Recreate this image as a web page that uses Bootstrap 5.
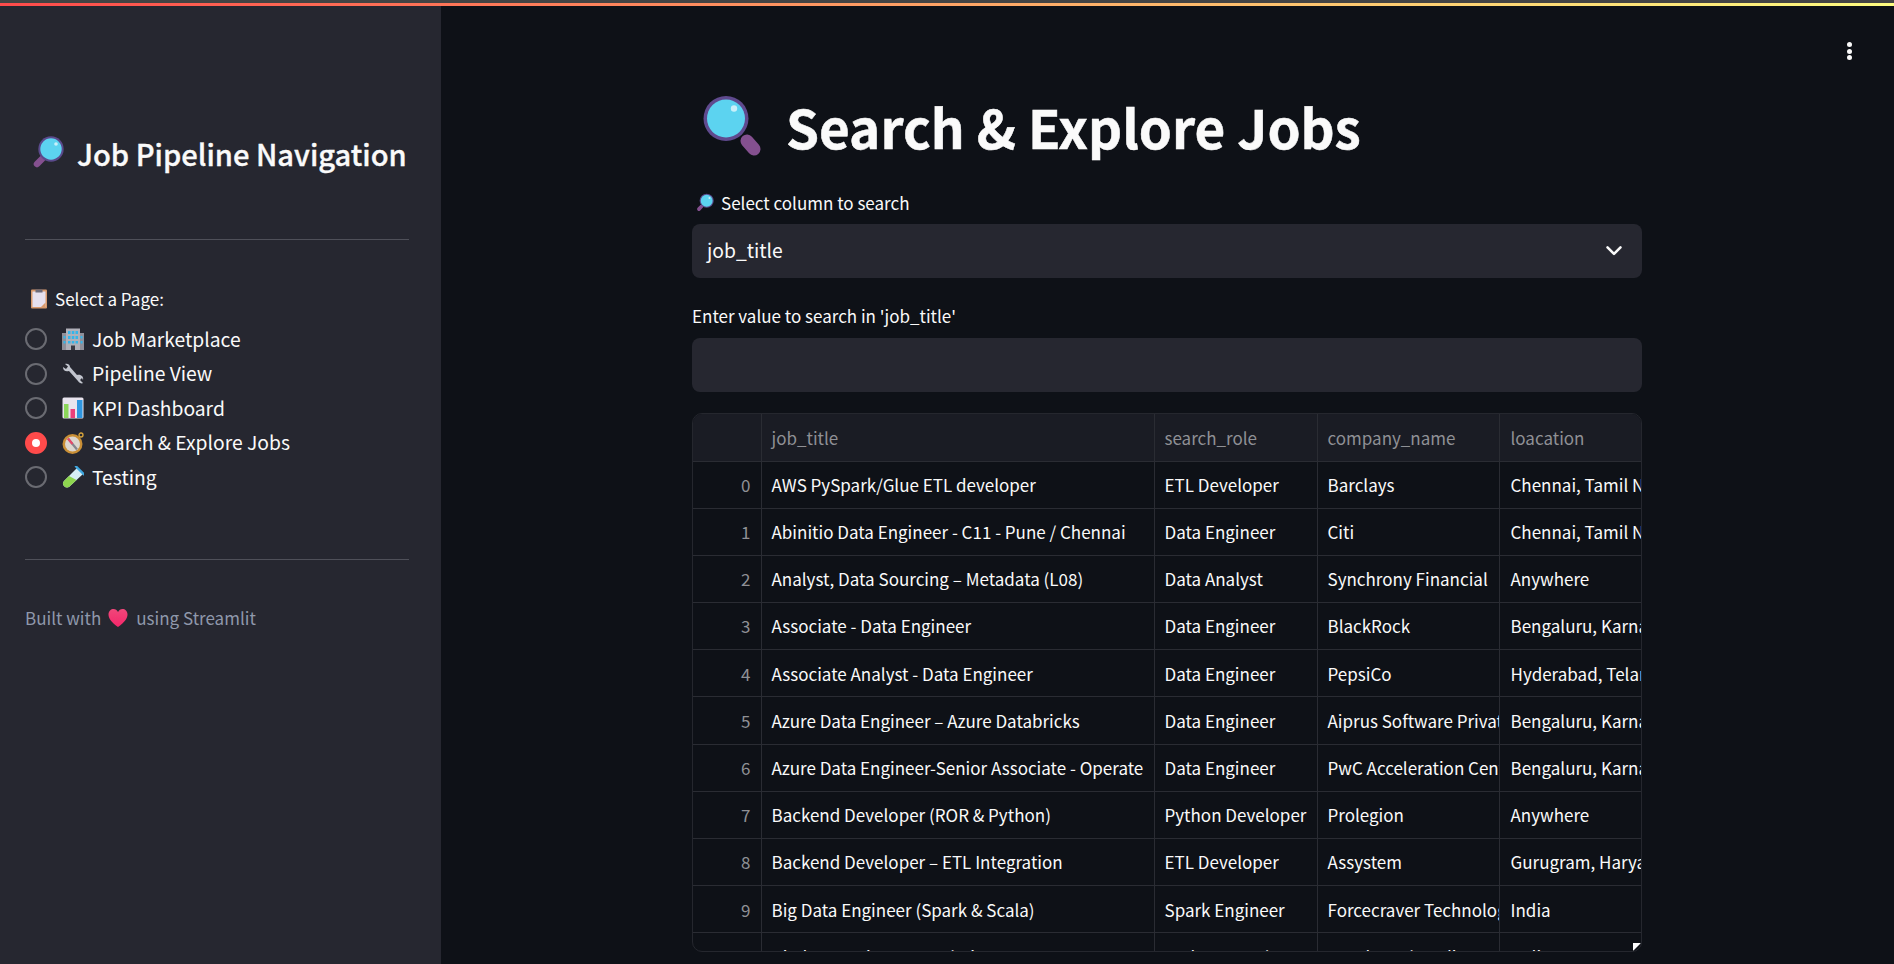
<!DOCTYPE html>
<html lang="en">
<head>
  <meta charset="UTF-8" />
  <meta name="viewport" content="width=device-width, initial-scale=1.0"/>
  <title>Search & Explore Jobs</title>
  <link href="https://cdn.jsdelivr.net/npm/bootstrap@5.3.0/dist/css/bootstrap.min.css" rel="stylesheet"/>
  <style>
    html, body { height: 100%; overflow: hidden; }
    body { background: #0e1117; color: #fafafa; font-family: "Noto Sans CJK SC", "Noto Sans", sans-serif; }
    svg { flex: none; }
    .top-strip { height: 3px; background: #444; }
    .top-rainbow { height: 3px; background: linear-gradient(90deg, #ff4b4b, #fffd80); }
    .app-body { height: 958px; }

    /* sidebar */
    .side-panel { width: 441px; background: #262730; padding: 0 32px 0 25px; }
    .side-title { font-size: 29.1px; font-weight: 500; line-height: 40px; margin: 127px 0 0 5px; -webkit-text-stroke: 0.35px #fafafa; }
    .side-title svg { width: 36px; height: 36px; margin-right: 11px; }
    .side-rule { border-top: 1px solid #4f5059; width: 384px; }
    .rule-one { margin-top: 66px; }
    .rule-two { margin-top: 64px; }
    .page-label { font-size: 17px; line-height: 24px; margin: 47px 0 0 4px; }
    .page-label svg { width: 20px; height: 20px; margin-right: 6px; }
    .page-list { margin-top: 11px; }
    .page-item { height: 34.5px; font-size: 19.3px; }
    .radio-dot { width: 22px; height: 22px; border-radius: 50%; border: 2px solid #6a6b72; margin-right: 15px; flex: none; }
    .radio-dot.is-on { background: #ff4b4b; border-color: #ff4b4b; }
    .radio-dot.is-on::after { content: ""; width: 8px; height: 8px; border-radius: 50%; background: #fff; }
    .page-item svg { width: 22px; height: 22px; margin-right: 8px; }
    .built-note { font-size: 17px; line-height: 24px; color: #8f98ab; margin: 46px 0 0 0; }
    .built-note svg { width: 20px; height: 20px; margin: 0 8px 0 7px; }

    /* main */
    .main-col { position: relative; }
    .kebab { position: absolute; top: 36px; right: 42px; width: 5px; display: flex; flex-direction: column; gap: 1.7px; }
    .kebab i { width: 5px; height: 5px; border-radius: 50%; background: #fafafa; display: block; }
    .main-inner { width: 950px; margin-left: 251px; }
    .page-title { font-size: 53px; font-weight: 700; line-height: 70px; margin: 85px 0 0 10px; -webkit-text-stroke: 0.5px #fafafa; }
    .page-title svg { width: 62px; height: 62px; margin-right: 22px; }
    .field-label { font-size: 17px; line-height: 24px; }
    .field-label svg { width: 20px; height: 20px; margin-right: 6px; }
    .label-one { margin: 30px 0 0 3px; }
    .label-one + .field-box { margin-top: 9px; padding-bottom: 2px; }
    .label-two { margin-top: 26px; }
    .field-box { height: 54px; background: #262730; border-radius: 8px; margin-top: 10px; padding: 0 15px; font-size: 19.3px; }
    .field-box svg { width: 26px; height: 26px; }

    /* table */
    .data-frame { height: 539px; margin-top: 21px; border: 1px solid #25272e; border-radius: 10px; overflow: hidden; position: relative; }
    .data-table { table-layout: fixed; width: 1100px; border-collapse: collapse; font-size: 17px; }
    .data-table th, .data-table td { height: 47.2px; padding: 0 10px; border-right: 1px solid #2a2c33; border-bottom: 1px solid #2a2c33; white-space: nowrap; overflow: hidden; font-weight: 400; }
    .data-table th { height: 47px; padding-top: 1px; background: #1a1c24; color: #8f9095; }
    .data-table td { color: #fafafa; }
    .data-table td.row-idx { text-align: right; color: #8f9095; }
    .data-table th:last-child, .data-table td:last-child { padding-left: 11px; }
    .col-idx { width: 68px; }
    .col-title { width: 393px; }
    .col-role { width: 163px; }
    .col-company { width: 182px; }
    .col-loc { width: 294px; }
    .resize-grip { position: absolute; right: 0; bottom: 0; width: 0; height: 0; border-top: 8px solid #fff; border-right: 8px solid transparent; }
  </style>
</head>
<body>
  <svg width="0" height="0" class="position-absolute">
    <defs>
      <linearGradient id="heart-fill" x1="0" y1="0" x2="0" y2="1">
        <stop offset="0" stop-color="#f0477a"/>
        <stop offset="1" stop-color="#f5266a"/>
      </linearGradient>
      <symbol id="ico-lens-left" viewBox="0 0 36 36">
        <path d="M12 24 L7 29" stroke="#84508f" stroke-width="6.500" stroke-linecap="round"/>
        <circle cx="21" cy="14" r="12.700" fill="#5b4a8c"/>
        <circle cx="21" cy="14" r="10.700" fill="#5cd3f0"/>
        <circle cx="26" cy="9" r="1.800" fill="#c9f0fa"/>
      </symbol>
      <symbol id="ico-lens-right" viewBox="0 0 62 62">
        <path d="M45 46 L52 54" stroke="#84508f" stroke-width="13" stroke-linecap="round"/>
        <circle cx="24" cy="23.500" r="22.500" fill="#5f4a8e"/>
        <circle cx="24" cy="23.500" r="19" fill="#5cd3f0"/>
        <circle cx="32" cy="13.500" r="3.200" fill="#c9f0fa"/>
      </symbol>
      <symbol id="ico-clipboard" viewBox="0 0 20 20">
        <rect x="2" y="0.500" width="16" height="19" rx="1" fill="#d99a6c"/>
        <rect x="3.500" y="2.500" width="13" height="15.500" fill="#e6e0ee"/>
        <path d="M12 18 L16.500 13.500 V18 Z" fill="#d99a6c"/>
        <rect x="6.500" y="0.500" width="7" height="3" fill="#6d6a78"/>
      </symbol>
      <symbol id="ico-building" viewBox="0 0 22 22">
        <rect x="0" y="5" width="5" height="17" fill="#8f8f99"/>
        <rect x="17" y="5" width="5" height="17" fill="#8f8f99"/>
        <rect x="4" y="0.500" width="14" height="21.500" fill="#b0b0b9"/>
        <path d="M6 3h2.500v3H6zM9.800 3h2.500v3H9.800zM13.500 3H16v3h-2.500zM6 8h2.500v3H6zM9.800 8h2.500v3H9.800zM13.500 8H16v3h-2.500zM6 13h2.500v2.500H6zM9.800 13h2.500v2.500H9.800zM13.500 13H16v2.500h-2.500zM1.500 8h2v2.500h-2zM18.500 8h2v2.500h-2zM1.500 13h2v2.500h-2zM18.500 13h2v2.500h-2z" fill="#35b5ea"/>
        <rect x="9" y="17.500" width="4" height="4.500" fill="#3a3a44"/>
      </symbol>
      <symbol id="ico-wrench" viewBox="0 0 22 22">
        <path d="M3 1 L6 3.500 L4 6 L1 4 C1 8 4 9 7 8 L16 18 C17 20 20 21 21 20 L18 17 L20 15 L21 17 C22 14 19 11 15 12 L8 4 C8 2 6 0 3 1 Z" fill="#c2c5ce"/>
      </symbol>
      <symbol id="ico-chart" viewBox="0 0 22 22">
        <rect x="0.500" y="0.500" width="21" height="21" rx="1.500" fill="#e8e4ee"/>
        <rect x="2" y="7" width="4.500" height="14" fill="#8bd65a"/>
        <rect x="8.500" y="12" width="4.500" height="9" fill="#ec3f7a"/>
        <rect x="15" y="3" width="5.500" height="18" fill="#2f96e0"/>
      </symbol>
      <symbol id="ico-compass" viewBox="0 0 22 22">
        <circle cx="10.500" cy="12" r="10" fill="#c98f36"/>
        <circle cx="10.500" cy="12" r="7.500" fill="#dcd6cf"/>
        <path d="M6 6.500 L15 17.500" stroke="#85858f" stroke-width="2.200"/>
        <path d="M6 6.500 L10.500 12" stroke="#e8476a" stroke-width="2.200"/>
        <circle cx="19" cy="3" r="2" fill="none" stroke="#d9a63c" stroke-width="1.300"/>
      </symbol>
      <symbol id="ico-tube" viewBox="0 0 22 22">
        <path d="M15 2 L21 8 L7 21 C3 23 -1 18 2 15 Z" fill="#d6eef5"/>
        <path d="M7 10 L14.500 14 L7 21 C3 23 -1 18 2 15 Z" fill="#8ed64f"/>
        <path d="M14 0.500 L22 8.500" stroke="#3fa7e0" stroke-width="2.400" stroke-linecap="round"/>
      </symbol>
      <symbol id="ico-heart" viewBox="0 0 20 20">
        <path d="M10 19 C3 14 0.500 10 0.500 6.500 C0.500 3 3 1 5.500 1 C7.500 1 9 2 10 4 C11 2 12.500 1 14.500 1 C17 1 19.500 3 19.500 6.500 C19.500 10 17 14 10 19 Z" fill="url(#heart-fill)"/>
      </symbol>
    </defs>
  </svg>

  <div class="top-strip"></div>
  <div class="top-rainbow"></div>
  <div class="app-body d-flex">
    <!-- Sidebar -->
    <aside class="side-panel flex-shrink-0">
      <div class="side-title d-flex align-items-center text-nowrap">
        <svg><use href="#ico-lens-left"/></svg>Job Pipeline Navigation
      </div>
      <div class="side-rule rule-one"></div>
      <div class="page-label d-flex align-items-center">
        <svg><use href="#ico-clipboard"/></svg>Select a Page:
      </div>
      <div class="page-list">
        <div class="page-item d-flex align-items-center">
          <span class="radio-dot"></span><svg><use href="#ico-building"/></svg>Job Marketplace
        </div>
        <div class="page-item d-flex align-items-center">
          <span class="radio-dot"></span><svg><use href="#ico-wrench"/></svg>Pipeline View
        </div>
        <div class="page-item d-flex align-items-center">
          <span class="radio-dot"></span><svg><use href="#ico-chart"/></svg>KPI Dashboard
        </div>
        <div class="page-item d-flex align-items-center">
          <span class="radio-dot is-on d-flex align-items-center justify-content-center"></span><svg><use href="#ico-compass"/></svg>Search &amp; Explore Jobs
        </div>
        <div class="page-item d-flex align-items-center">
          <span class="radio-dot"></span><svg><use href="#ico-tube"/></svg>Testing
        </div>
      </div>
      <div class="side-rule rule-two"></div>
      <div class="built-note d-flex align-items-center">
        Built with <svg><use href="#ico-heart"/></svg> using Streamlit
      </div>
    </aside>

    <!-- Main content -->
    <main class="main-col flex-grow-1">
      <div class="kebab"><i></i><i></i><i></i></div>
      <div class="main-inner">
        <h1 class="page-title d-flex align-items-center text-nowrap">
          <svg><use href="#ico-lens-right"/></svg>Search &amp; Explore Jobs
        </h1>
        <div class="field-label label-one d-flex align-items-center">
          <svg><use href="#ico-lens-left"/></svg>Select column to search
        </div>
        <div class="field-box d-flex align-items-center justify-content-between">
          <span>job_title</span>
          <svg viewBox="0 0 20 20"><path d="M5 8 L10 13 L15 8" fill="none" stroke="#fafafa" stroke-width="2" stroke-linecap="round" stroke-linejoin="round"/></svg>
        </div>
        <div class="field-label label-two">Enter value to search in 'job_title'</div>
        <div class="field-box"></div>

        <div class="data-frame">
          <table class="data-table">
            <colgroup>
              <col class="col-idx"><col class="col-title"><col class="col-role"><col class="col-company"><col class="col-loc">
            </colgroup>
            <thead>
              <tr><th></th><th>job_title</th><th>search_role</th><th>company_name</th><th>loacation</th></tr>
            </thead>
            <tbody>
              <tr><td class="row-idx">0</td><td>AWS PySpark/Glue ETL developer</td><td>ETL Developer</td><td>Barclays</td><td>Chennai, Tamil Nadu, India</td></tr>
              <tr><td class="row-idx">1</td><td>Abinitio Data Engineer - C11 - Pune / Chennai</td><td>Data Engineer</td><td>Citi</td><td>Chennai, Tamil Nadu, India</td></tr>
              <tr><td class="row-idx">2</td><td>Analyst, Data Sourcing – Metadata (L08)</td><td>Data Analyst</td><td>Synchrony Financial</td><td>Anywhere</td></tr>
              <tr><td class="row-idx">3</td><td>Associate - Data Engineer</td><td>Data Engineer</td><td>BlackRock</td><td>Bengaluru, Karnataka, India</td></tr>
              <tr><td class="row-idx">4</td><td>Associate Analyst - Data Engineer</td><td>Data Engineer</td><td>PepsiCo</td><td>Hyderabad, Telangana, India</td></tr>
              <tr><td class="row-idx">5</td><td>Azure Data Engineer – Azure Databricks</td><td>Data Engineer</td><td>Aiprus Software Private Limited</td><td>Bengaluru, Karnataka, India</td></tr>
              <tr><td class="row-idx">6</td><td>Azure Data Engineer-Senior Associate - Operate</td><td>Data Engineer</td><td>PwC Acceleration Center India</td><td>Bengaluru, Karnataka, India</td></tr>
              <tr><td class="row-idx">7</td><td>Backend Developer (ROR &amp; Python)</td><td>Python Developer</td><td>Prolegion</td><td>Anywhere</td></tr>
              <tr><td class="row-idx">8</td><td>Backend Developer – ETL Integration</td><td>ETL Developer</td><td>Assystem</td><td>Gurugram, Haryana, India</td></tr>
              <tr><td class="row-idx">9</td><td>Big Data Engineer (Spark &amp; Scala)</td><td>Spark Engineer</td><td>Forcecraver Technologies</td><td>India</td></tr>
              <tr><td class="row-idx">10</td><td>Bigdata Engineer - Analytics</td><td>Python Developer</td><td>Bosch Tools India</td><td>India</td></tr>
            </tbody>
          </table>
          <div class="resize-grip"></div>
        </div>
      </div>
    </main>
  </div>
</body>
</html>
